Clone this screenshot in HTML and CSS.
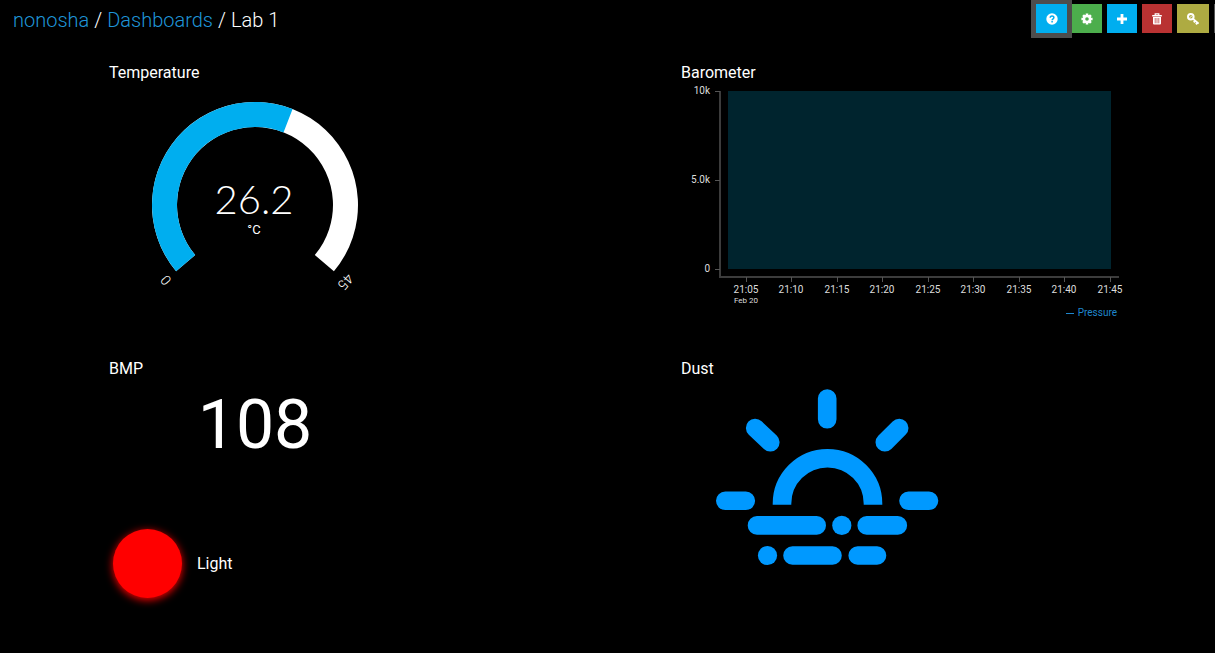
FILE: index.html
```html
<!DOCTYPE html>
<html lang="en">
<head>
<meta charset="utf-8">
<title>Lab 1</title>
<meta name="viewport" content="width=device-width, initial-scale=1">
<link rel="stylesheet" href="styles.css">
</head>
<body>
<header class="topbar">
  <nav class="crumbs" aria-label="Breadcrumb">
    <a href="#">nonosha</a><span class="sep">/</span><a href="#">Dashboards</a><span class="sep">/</span><span>Lab 1</span>
  </nav>
  <div class="actions">
    <button type="button" class="btn btn-info is-focused" aria-label="Help">
      <svg class="icon" viewBox="0 0 12 12"><circle cx="6" cy="6" r="5.7" fill="#fff"/><path d="M4.2 4.7C4.2 2.4 7.9 2.4 7.9 4.6C7.9 5.8 6.1 5.8 6.1 7.2M6.1 8.1V9.6" fill="none" stroke="#00aeef" stroke-width="1.5"/></svg>
    </button>
    <button type="button" class="btn btn-success" aria-label="Settings">
      <svg class="icon" viewBox="0 0 12 12"><g stroke="#fff" stroke-width="2.6"><path d="M6 .4V11.6M.4 6H11.6M2.1 2.1L9.9 9.9M9.9 2.1L2.1 9.9"/></g><circle cx="6" cy="6" r="4.3" fill="#fff"/><circle cx="6" cy="6" r="1.8" fill="#4cae4c"/></svg>
    </button>
    <button type="button" class="btn btn-info" aria-label="Add">
      <svg class="icon" viewBox="0 0 12 12"><path d="M6 1V11M1 6H11" stroke="#fff" stroke-width="2.8"/></svg>
    </button>
    <button type="button" class="btn btn-danger" aria-label="Delete">
      <svg class="icon" viewBox="0 0 12 12"><path d="M4.2 2V.9H7.8V2" fill="none" stroke="#fff" stroke-width="1.2"/><path d="M1.2 1.9H10.8V3.6H1.2zM2 4.1H10V10.6Q10 11.6 9 11.6H3Q2 11.6 2 10.6z" fill="#fff"/><path d="M4.2 5V10.3M6 5V10.3M7.8 5V10.3" stroke="#b93232" stroke-width=".7"/></svg>
    </button>
    <button type="button" class="btn btn-key" aria-label="Keys">
      <svg class="icon" viewBox="0 0 12 12"><circle cx="3.8" cy="3.8" r="2.8" fill="none" stroke="#fff" stroke-width="2"/><path d="M5.8 5.6L11.6 10.6M8.2 7.6L6.8 9.4M10.4 9.4L9 11.4" fill="none" stroke="#fff" stroke-width="1.9"/><path d="M2.8 4.8L4.8 2.8" stroke="#fff" stroke-width="1"/></svg>
    </button>
    <button type="button" class="btn btn-more" aria-label="More"></button>
  </div>
</header>

<main class="board">
  <section class="panel">
    <h2 class="title">Temperature</h2>
    <svg class="tile" viewBox="109 83 292 245" role="img" aria-label="Temperature gauge">
      <path d="M176.1 271.2A103 103 0 1 1 333.9 271.2L314.8 255.1A78 78 0 1 0 195.2 255.1Z" fill="#fff"/>
      <path d="M176.1 271.2A103 103 0 0 1 292.6 109.1L283.5 132.4A78 78 0 0 0 195.2 255.1Z" fill="#00aeef"/>
      <text class="reading" x="254" y="214">26.2</text>
      <text class="unit" x="254" y="234">°C</text>
      <text class="bound" transform="translate(165 281) rotate(50)" y="4">0</text>
      <text class="bound" transform="translate(345 281) rotate(130)" y="4">45</text>
    </svg>
  </section>

  <section class="panel">
    <h2 class="title">Barometer</h2>
    <svg class="chart" viewBox="681 83 450 245" role="img" aria-label="Pressure over time">
      <rect x="728" y="91" width="383" height="178" fill="#00242e"/>
      <path class="axis" d="M720 91V277H1119"/>
      <path class="tick" d="M715 91.5H720M715 180.5H720M715 269.5H720M746.5 277V282M791.5 277V282M837.5 277V282M882.5 277V282M928.5 277V282M973.5 277V282M1019.5 277V282M1064.5 277V282M1110.5 277V282"/>
      <g class="scale scale-y">
        <text x="710" y="94">10k</text>
        <text x="710" y="183">5.0k</text>
        <text x="710" y="272">0</text>
      </g>
      <g class="scale">
        <text x="746" y="293">21:05</text>
        <text x="791" y="293">21:10</text>
        <text x="837" y="293">21:15</text>
        <text x="882" y="293">21:20</text>
        <text x="928" y="293">21:25</text>
        <text x="973" y="293">21:30</text>
        <text x="1019" y="293">21:35</text>
        <text x="1064" y="293">21:40</text>
        <text x="1110" y="293">21:45</text>
      </g>
      <text class="date" x="746" y="303">Feb 20</text>
      <path d="M1066 313.5H1074" stroke="#1f86cc"/>
      <text class="legend" x="1117" y="316">Pressure</text>
    </svg>
  </section>

  <section class="stack">
    <div class="panel">
      <h2 class="title">BMP</h2>
      <p class="number">108</p>
    </div>
    <div class="indicator"><span class="lamp"></span><span>Light</span></div>
  </section>

  <section class="panel">
    <h2 class="title">Dust</h2>
    <svg class="tile" viewBox="681 379 292 245" role="img" aria-label="Hazy sun">
      <g fill="none" stroke="#0099ff" stroke-width="18.6" stroke-linecap="round">
        <path d="M827.2 398.5V419.3M755.2 428L770.3 442.3M899.2 428L884.8 442.3M725.3 500.8H745.8M908.5 500.8H929"/>
        <path d="M757 525.4H816.7M866.7 525.4H897.8M792.5 555.5H832.5M857.7 555.5H877"/>
        <path d="M782 504.8V503.7A45.5 45.5 0 0 1 873 503.7V504.8" stroke-linecap="butt"/>
      </g>
      <circle cx="841.8" cy="525.4" r="9.6" fill="#0099ff"/>
      <circle cx="767.5" cy="555.5" r="9.6" fill="#0099ff"/>
    </svg>
  </section>
</main>
</body>
</html>
```
FILE: styles.css
```css
* { box-sizing: border-box; }

body {
  margin: 0;
  min-height: 100vh;
  background: #000;
  color: #fff;
  font: 16px/20px Roboto, "Liberation Sans", sans-serif;
}

.topbar {
  display: flex;
  justify-content: space-between;
  overflow: hidden;
  padding: 4px 0 5px 13px;
}

.crumbs {
  display: flex;
  align-items: center;
  gap: 5px;
  font-size: 20px;
  font-weight: 300;
  line-height: 32px;
}

.crumbs a { color: #1f95d8; text-decoration: none; }

.actions {
  display: flex;
  align-items: flex-start;
  gap: 5px;
  margin-right: -29px;
}

.btn {
  display: flex;
  align-items: center;
  justify-content: center;
  width: 30px;
  height: 29px;
  padding: 0;
  border: 0;
}

.btn-info { background: #00aeef; }
.btn-success { background: #4cae4c; }
.btn-danger { background: #b93232; }
.btn-key { width: 32px; background: #aeab42; }
.btn-more { background: #555; }
.is-focused { width: 31px; box-shadow: 0 0 0 5px #4d4d4d; }
.icon { width: 12px; height: 12px; }

.board {
  display: grid;
  grid-template-columns: repeat(2, minmax(0, 1fr));
  gap: 31px 38px;
  padding: 22px 0 20px 109px;
}

.title { margin: 0; font-size: 16px; font-weight: 400; }

.tile, .chart { display: block; max-width: 100%; height: auto; }
.tile { width: 292px; }
.chart { width: 450px; }

text { fill: #fff; text-anchor: middle; }
.reading { font: 300 40px Lato, sans-serif; }
.unit { font-size: 13px; }
.bound { font-size: 14px; font-weight: 300; }
.axis { fill: none; stroke: #3c3c3c; stroke-width: 2; }
.tick { stroke: #555; }
.scale text { font-size: 10px; fill: #ddd; }
.scale-y text { text-anchor: end; }
.date { font-size: 8px; fill: #ddd; }
.legend { font-size: 10px; fill: #1f86cc; text-anchor: end; }

.stack { display: flex; flex-direction: column; gap: 64px; }

.number {
  width: 292px;
  max-width: 100%;
  margin: 0;
  padding-top: 6px;
  font-size: 68px;
  line-height: 80px;
  text-align: center;
}

.indicator { display: flex; align-items: center; gap: 15px; padding-left: 4px; }

.lamp {
  width: 69px;
  height: 69px;
  border-radius: 50%;
  background: #f00;
  box-shadow: 0 2px 8px #f00;
}
```
